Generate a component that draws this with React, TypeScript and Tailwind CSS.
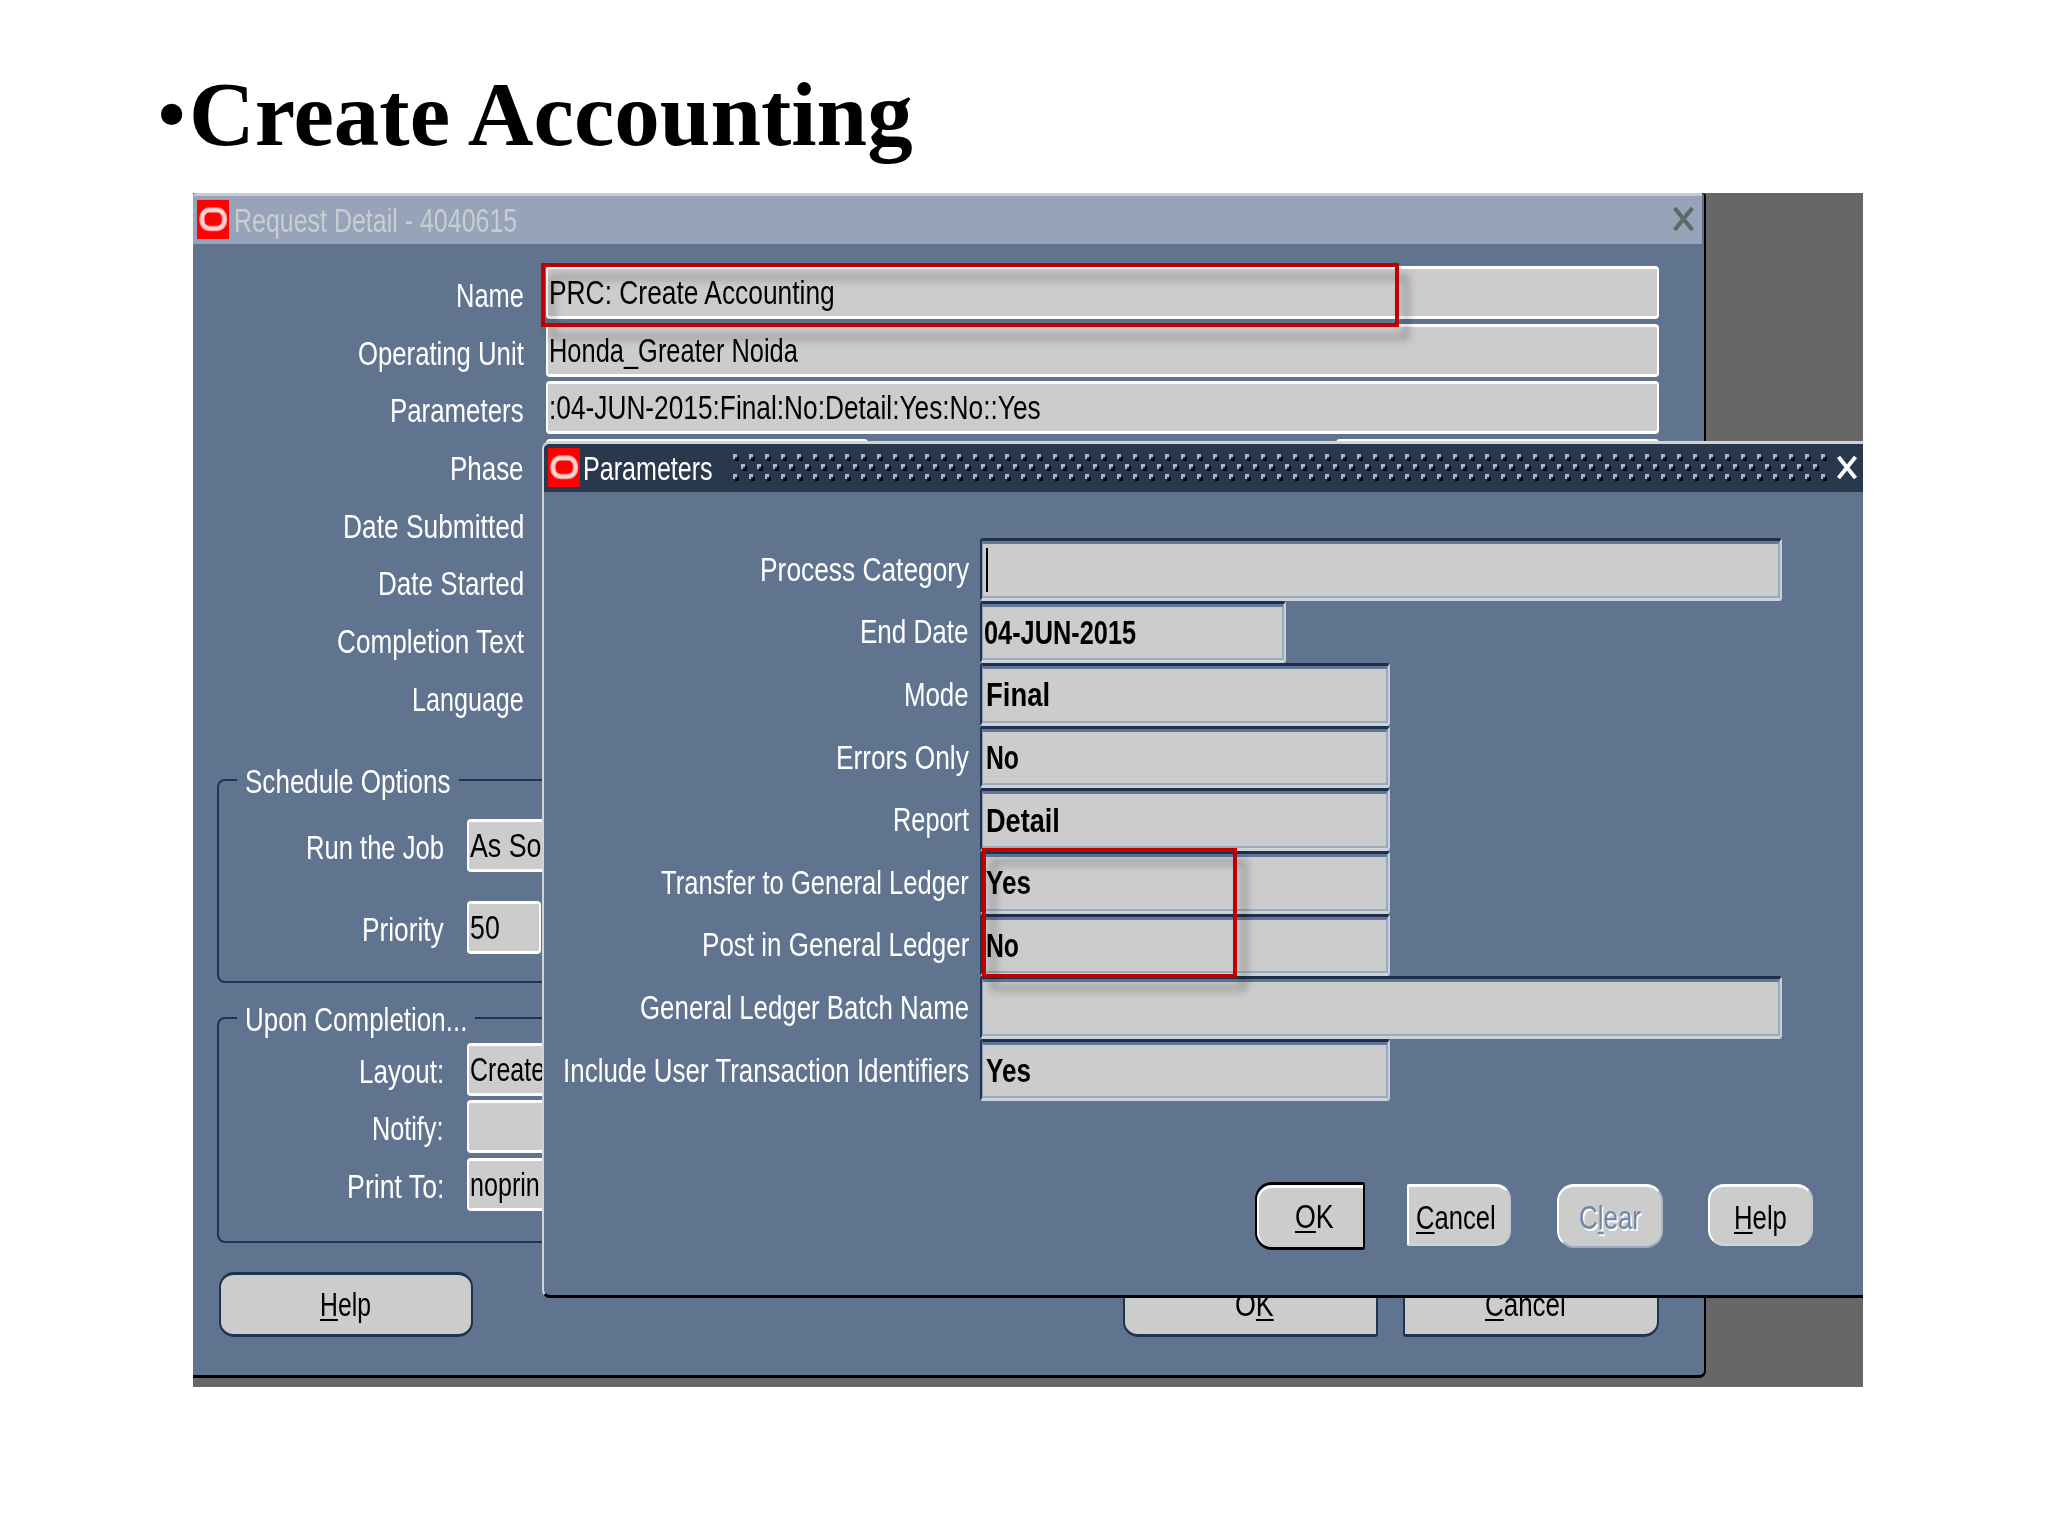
import { useLayoutEffect, useRef, useState } from 'react';
import type { ReactNode } from 'react';

type Align = 'left' | 'right';

// Squeezes a run of text horizontally so it takes exactly `width` pixels
function Fit({ width, align = 'left', children }: { width: number; align?: Align; children: ReactNode }) {
  const ref = useRef<HTMLSpanElement>(null);
  const [scale, setScale] = useState(1);

  useLayoutEffect(() => {
    if (ref.current) {
      setScale(width / ref.current.offsetWidth);
    }
  }, [width]);

  return (
    <span className={`inline-flex shrink-0 ${align === 'right' ? 'justify-end' : 'justify-start'}`} style={{ width }}>
      <span
        ref={ref}
        className={`inline-block shrink-0 whitespace-pre ${align === 'right' ? 'origin-right' : 'origin-left'}`}
        style={{ transform: `scaleX(${scale})` }}
      >
        {children}
      </span>
    </span>
  );
}

function HotKey({ children }: { children: ReactNode }) {
  return <span className="underline decoration-[2.4px] underline-offset-[3px] [text-decoration-skip-ink:none]">{children}</span>;
}

function OracleIcon() {
  return (
    <svg className="h-[39px] w-[32px] shrink-0" viewBox="0 0 32 39" fill="none">
      <rect width="32" height="39" fill="#fe0000" />
      <rect x="5" y="10" width="22.5" height="18.5" rx="7.5" ry="8" stroke="#ff8a8a" strokeWidth="5.5" />
      <rect x="5" y="10" width="22.5" height="18.5" rx="7.5" ry="8" stroke="#ffd6d6" strokeWidth="3.4" />
    </svg>
  );
}

function CloseIcon({ className }: { className: string }) {
  return (
    <svg className={className} viewBox="0 0 20 24" fill="none" stroke="currentColor" strokeWidth="4" preserveAspectRatio="none">
      <path d="M1.5 1 L18.5 23 M18.5 1 L1.5 23" />
    </svg>
  );
}

// Grip texture in the title bar of the active window
function Grip() {
  return (
    <svg className="h-[28px] w-[1096px] shrink-0" fill="none" shapeRendering="crispEdges">
      <defs>
        <pattern id="grip" width="16" height="28" patternUnits="userSpaceOnUse">
          <path d="M4 3 h2 v4 h-4 v-2 h2 z" fill="#00060f" />
          <path d="M12 12 h2 v5 h-4 v-2 h2 z" fill="#00060f" />
          <path d="M4 23 h2 v4 h-4 v-2 h2 z" fill="#00060f" />
          <path d="M0 0 h4 v3 h-2 v2 h-2 z" fill="#a9b9ca" />
          <path d="M8 10 h4 v3 h-2 v2 h-2 z" fill="#a9b9ca" />
          <path d="M0 20 h4 v3 h-2 v2 h-2 z" fill="#a9b9ca" />
        </pattern>
      </defs>
      <rect width="1096" height="28" fill="url(#grip)" />
    </svg>
  );
}

function Field({ className = '', children }: { className?: string; children?: ReactNode }) {
  return (
    <div className={`flex h-[53px] shrink-0 items-center overflow-hidden rounded-[4px] border-x-2 border-y-[3px] border-white bg-[#cccccc] pl-px text-black ${className}`}>
      {children}
    </div>
  );
}

const requestRows = [
  { label: 'Name', width: 68, value: 'PRC: Create Accounting', valueWidth: 286 },
  { label: 'Operating Unit', width: 166, value: 'Honda_Greater Noida', valueWidth: 249 },
  { label: 'Parameters', width: 134, value: ':04-JUN-2015:Final:No:Detail:Yes:No::Yes', valueWidth: 492 },
  { label: 'Phase', width: 74, split: true },
  { label: 'Date Submitted', width: 181 },
  { label: 'Date Started', width: 146 },
  { label: 'Completion Text', width: 187 },
  { label: 'Language', width: 112 },
];

const completionRows = [
  { label: 'Layout:', width: 85, value: 'Create', valueWidth: 75 },
  { label: 'Notify:', width: 72 },
  { label: 'Print To:', width: 97, value: 'noprin', valueWidth: 70 },
];

const parameterRows = [
  { label: 'Process Category', width: 209, size: 'w-[802px]', caret: true },
  { label: 'End Date', width: 109, size: 'w-[306px]', value: '04-JUN-2015', valueWidth: 152, pad: 'pl-[1px]' },
  { label: 'Mode', width: 65, size: 'w-[410px]', value: 'Final', valueWidth: 64, pad: 'pl-[3px]' },
  { label: 'Errors Only', width: 133, size: 'w-[410px]', value: 'No', valueWidth: 33, pad: 'pl-[3px]' },
  { label: 'Report', width: 76, size: 'w-[410px]', value: 'Detail', valueWidth: 74, pad: 'pl-[3px]' },
  { label: 'Transfer to General Ledger', width: 308, size: 'w-[410px]', value: 'Yes', valueWidth: 45, pad: 'pl-[3px]' },
  { label: 'Post in General Ledger', width: 267, size: 'w-[410px]', value: 'No', valueWidth: 33, pad: 'pl-[3px]' },
  { label: 'General Ledger Batch Name', width: 329, size: 'w-[802px]' },
  { label: 'Include User Transaction Identifiers', width: 406, size: 'w-[410px]', value: 'Yes', valueWidth: 45, pad: 'pl-[3px]' },
];

function GroupLabel({ width, children }: { width: number; children: string }) {
  return (
    <div className="flex w-[225px] shrink-0 justify-end pt-[12px]">
      <Fit width={width} align="right">{children}</Fit>
    </div>
  );
}

function RequestWindow() {
  return (
    <div className="absolute left-0 top-0 h-[1185px] w-[1513px] overflow-hidden rounded-t-[4px] rounded-br-[7px] border-b-[3px] border-r-2 border-black bg-[#60748f]">
      <div className="mr-[2px] flex h-[51px] items-center border-t-[3px] border-[#c6cad2] bg-[#96a3b9] pb-[2px] pl-[4px] text-[#c9cdd0]">
        <OracleIcon />
        <div className="flex-1 pl-[5px] pt-[2px]">
          <Fit width={283}>Request Detail - 4040615</Fit>
        </div>
        <CloseIcon className="mr-[8px] h-[24px] w-[21px] text-[#5e6868]" />
      </div>

      <div className="pt-[22px]">
        {requestRows.map(row => (
          <div key={row.label} className="flex h-[57.7px] items-start">
            <div className="flex w-[331px] shrink-0 justify-end pt-[13px]">
              <Fit width={row.width} align="right">{row.label}</Fit>
            </div>
            {row.value && (
              <Field className="ml-[22px] w-[1113px]">
                <Fit width={row.valueWidth}>{row.value}</Fit>
              </Field>
            )}
            {row.split && (
              <div className="ml-[22px] flex w-[1113px] justify-between">
                <Field className="w-[322px]" />
                <Field className="w-[323px]" />
              </div>
            )}
          </div>
        ))}
      </div>

      <fieldset className="ml-[24px] mt-[34px] h-[221px] w-[1441px] rounded-[8px] border-2 border-[#1f3453]">
        <legend className="ml-[18px] h-[36px] px-[8px] pt-[3px]">
          <Fit width={206}>Schedule Options</Fit>
        </legend>
        <div className="flex pt-[21px]">
          <GroupLabel width={138}>Run the Job</GroupLabel>
          <div className="pl-[23px]">
            <Field className="w-[600px]">
              <Fit width={246}>As Soon as Possible</Fit>
            </Field>
          </div>
        </div>
        <div className="flex pt-[29px]">
          <GroupLabel width={82}>Priority</GroupLabel>
          <div className="pl-[23px]">
            <Field className="w-[74px]">
              <Fit width={30}>50</Fit>
            </Field>
          </div>
        </div>
      </fieldset>

      <fieldset className="ml-[24px] mt-[17px] h-[243px] w-[1441px] rounded-[8px] border-2 border-[#1f3453]">
        <legend className="ml-[18px] h-[36px] px-[8px] pt-[3px]">
          <Fit width={222}>Upon Completion...</Fit>
        </legend>
        <div className="pt-[7px]">
          {completionRows.map(row => (
            <div key={row.label} className="flex h-[57.6px]">
              <GroupLabel width={row.width}>{row.label}</GroupLabel>
              <div className="pl-[23px]">
                <Field className="w-[600px]">
                  {row.value && <Fit width={row.valueWidth}>{row.value}</Fit>}
                </Field>
              </div>
            </div>
          ))}
        </div>
      </fieldset>

      <div className="ml-[26px] mt-[29px] flex h-[65px] w-[1440px] text-black">
        <div className="flex w-[254px] items-center justify-center rounded-[15px] border-x-2 border-y-[3px] border-[#1f3453] bg-[#cccccc] pr-[2px]">
          <Fit width={51}><HotKey>H</HotKey>elp</Fit>
        </div>
        <div className="ml-auto flex w-[255px] items-center justify-center rounded-l-[15px] rounded-r-[3px] border-x-2 border-y-[3px] border-[#1f3453] bg-[#cacdc9] pl-[8px]">
          <Fit width={39}>O<HotKey>K</HotKey></Fit>
        </div>
        <div className="ml-[25px] flex w-[256px] items-center justify-center rounded-l-[3px] rounded-r-[15px] border-x-2 border-y-[3px] border-[#1f3453] bg-[#cccccc] pr-[12px]">
          <Fit width={81}><HotKey>C</HotKey>ancel</Fit>
        </div>
      </div>
    </div>
  );
}

function ParametersDialog() {
  return (
    <div className="absolute left-[349px] right-0 top-[248px] h-[857px] overflow-hidden rounded-l-[8px] border-b-[3px] border-l-2 border-t-[3px] border-b-black border-l-[#cfd4dc] border-t-[#cfd3d6] bg-[#60748f]">
      <div className="flex h-[48px] items-center bg-[#29384d] pb-px pl-[4px]">
        <OracleIcon />
        <div className="w-[153px] pl-[3px] pt-px">
          <Fit width={130}>Parameters</Fit>
        </div>
        <Grip />
        <CloseIcon className="ml-[8px] h-[23px] w-[20px] text-white" />
      </div>

      <div className="pt-[46px]">
        {parameterRows.map(row => (
          <div key={row.label} className="flex h-[62.6px]">
            <div className="flex w-[425px] shrink-0 items-center justify-end">
              <Fit width={row.width} align="right">{row.label}</Fit>
            </div>
            <div className={`ml-[11px] flex rounded-[3px] border-b-[3px] border-l-2 border-r-2 border-t-[3px] border-b-[#cdd3dc] border-l-[#1f3453] border-r-[#c8d0dc] border-t-[#1f3048] ${row.size}`}>
              <div className="flex flex-1 items-center border-b-2 border-l border-r-2 border-t-[3px] border-b-[#9aabbb] border-l-[#8f9db0] border-r-[#9aa8bc] border-t-[#60779a] bg-[#cccccc] font-bold text-black">
                {row.caret && <span className="ml-[3px] h-[44px] w-[2px] bg-black" />}
                {row.value && (
                  <span className={row.pad}>
                    <Fit width={row.valueWidth}>{row.value}</Fit>
                  </span>
                )}
              </div>
            </div>
          </div>
        ))}
      </div>

      <div className="ml-[711px] mt-[81px] flex items-start text-black">
        <div className="h-[68px] w-[110px] rounded-l-[17px] rounded-r-[3px] border-x-2 border-y-[3px] border-black">
          <div className="flex h-full items-center justify-center rounded-l-[15px] border-l-2 border-t-[3px] border-white bg-[#cccccc] pb-[2px] pl-[6px]">
            <Fit width={39}><HotKey>O</HotKey>K</Fit>
          </div>
        </div>
        <div className="ml-[42px] mt-[2px] flex h-[62px] w-[104px] items-center justify-center rounded-l-[2px] rounded-r-[15px] border-b-2 border-l-2 border-r-2 border-t-[3px] border-b-[#cfd6da] border-l-white border-r-[#bcc8d2] border-t-white bg-[#cccccc] pr-[7px] pt-[3px]">
          <Fit width={80}><HotKey>C</HotKey>ancel</Fit>
        </div>
        <div className="ml-[46px] mt-[2px] flex h-[64px] w-[106px] items-center justify-center rounded-[17px] border-b-2 border-l-2 border-r-2 border-t-[3px] border-b-[#9cabbd] border-l-white border-r-[#a9b6c6] border-t-white bg-[#cccccc] pt-[1px] text-[#7286aa] [text-shadow:2px_2.4px_0_white]">
          <Fit width={62}>C<HotKey>l</HotKey>ear</Fit>
        </div>
        <div className="ml-[45px] mt-[2px] flex h-[62px] w-[105px] items-center justify-center rounded-[16px] border-b-2 border-l-2 border-r-2 border-t-[3px] border-b-[#cfd6da] border-l-white border-r-[#bcc8d2] border-t-white bg-[#cccccc] pt-[3px]">
          <Fit width={53}><HotKey>H</HotKey>elp</Fit>
        </div>
      </div>
    </div>
  );
}

export default function App() {
  return (
    <div className="flex h-[1536px] w-[2048px] flex-col overflow-hidden bg-white">
      <h1 className="flex h-[193px] shrink-0 items-start pl-[158px] pt-[69px] font-['Liberation_Serif',serif] text-[91px] font-bold leading-none text-black">
        <span className="w-[31px] pt-[6px] text-[78px]">
          <Fit width={27}>•</Fit>
        </span>
        <Fit width={724}>Create Accounting</Fit>
      </h1>

      <div className="relative ml-[193px] h-[1194px] w-[1670px] overflow-hidden bg-[#676767] font-['Liberation_Sans',Arial,sans-serif] text-[33px] leading-none text-white">
        <RequestWindow />
        <ParametersDialog />
        <div className="absolute left-[348px] top-[70px] h-[64px] w-[858px] border-[4px] border-[#c00000] [filter:drop-shadow(9px_12px_4px_rgba(0,0,0,0.35))]" />
        <div className="absolute left-[789px] top-[655px] h-[130px] w-[255px] border-[4px] border-[#c00000] [filter:drop-shadow(9px_12px_4px_rgba(0,0,0,0.35))]" />
      </div>
    </div>
  );
}
